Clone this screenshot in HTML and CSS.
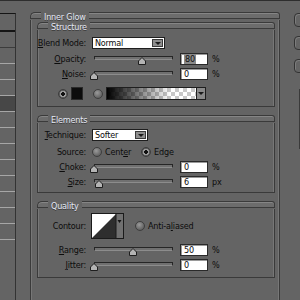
FILE: index.html
```html
<!DOCTYPE html>
<html lang="en">
<head>
    <meta charset="UTF-8">
    <title>Layer Style - Inner Glow</title>
    <link rel="stylesheet" href="styles.css">
</head>
<body>
    <div class="app">
        <ul class="layers">
            <li class="first"></li>
            <li class="shade"></li>
            <li></li>
            <li></li>
            <li></li>
            <li class="selected"></li>
            <li></li>
            <li></li>
            <li></li>
            <li></li>
            <li></li>
            <li></li>
            <li></li>
            <li></li>
        </ul>

        <div class="group outer">
            <div class="group-head"><span class="title">Inner Glow</span></div>
            <div class="group-body">

                <div class="group structure">
                    <div class="group-head"><span class="title">Structure</span></div>
                    <div class="group-body">
                        <div class="row">
                            <span class="label"><span><u>B</u>lend Mode:</span></span>
                            <div class="select wide"><span>Normal</span><i class="drop"></i></div>
                        </div>
                        <div class="row gap4">
                            <span class="label"><span><u>O</u>pacity:</span></span>
                            <div class="slider"><div class="track"></div>
                                <svg class="thumb" style="left:46px" width="8" height="8" viewBox="0 0 8 8"><polygon points="4,0.5 7.5,4 7.5,7.5 0.5,7.5 0.5,4" fill="#b4b4b4" stroke="#1e1e1e"/></svg>
                            </div>
                            <div class="field"><span class="hilite">80</span></div>
                            <span class="unit">%</span>
                        </div>
                        <div class="row gap3">
                            <span class="label"><span><u>N</u>oise:</span></span>
                            <div class="slider"><div class="track"></div>
                                <svg class="thumb" style="left:-2px" width="8" height="8" viewBox="0 0 8 8"><polygon points="4,0.5 7.5,4 7.5,7.5 0.5,7.5 0.5,4" fill="#b4b4b4" stroke="#1e1e1e"/></svg>
                            </div>
                            <div class="field">0</div>
                            <span class="unit">%</span>
                        </div>
                        <div class="row color-row">
                            <span class="radio on"></span>
                            <span class="swatch"></span>
                            <span class="radio"></span>
                            <div class="gradient"><i class="drop dark"></i></div>
                        </div>
                    </div>
                </div>

                <div class="group elements">
                    <div class="group-head"><span class="title">Elements</span></div>
                    <div class="group-body">
                        <div class="row">
                            <span class="label"><span><u>T</u>echnique:</span></span>
                            <div class="select"><span>Softer</span><i class="drop"></i></div>
                        </div>
                        <div class="row gap5">
                            <span class="label"><span>Source:</span></span>
                            <span class="radio"></span>
                            <span class="choice">Cent<u>e</u>r</span>
                            <span class="radio on"></span>
                            <span class="choice">Edge</span>
                        </div>
                        <div class="row gap3">
                            <span class="label"><span><u>C</u>hoke:</span></span>
                            <div class="slider"><div class="track"></div>
                                <svg class="thumb" style="left:-2px" width="8" height="8" viewBox="0 0 8 8"><polygon points="4,0.5 7.5,4 7.5,7.5 0.5,7.5 0.5,4" fill="#b4b4b4" stroke="#1e1e1e"/></svg>
                            </div>
                            <div class="field">0</div>
                            <span class="unit">%</span>
                        </div>
                        <div class="row gap3">
                            <span class="label"><span><u>S</u>ize:</span></span>
                            <div class="slider"><div class="track"></div>
                                <svg class="thumb" style="left:3px" width="8" height="8" viewBox="0 0 8 8"><polygon points="4,0.5 7.5,4 7.5,7.5 0.5,7.5 0.5,4" fill="#b4b4b4" stroke="#1e1e1e"/></svg>
                            </div>
                            <div class="field">6</div>
                            <span class="unit">px</span>
                        </div>
                    </div>
                </div>

                <div class="group quality">
                    <div class="group-head"><span class="title">Quality</span></div>
                    <div class="group-body">
                        <div class="row contour-row">
                            <span class="label"><span>Contour:</span></span>
                            <svg class="contour" width="33" height="26" viewBox="0 0 33 26">
                                <rect x="0.5" y="0.5" width="32" height="25" fill="#2e2e2e" stroke="#1a1a1a"/>
                                <polygon points="1,1 25,1 1,25" fill="#ffffff"/>
                                <rect x="25" y="1" width="7" height="24" fill="#707070"/>
                                <line x1="25" y1="1" x2="25" y2="25" stroke="#1a1a1a"/>
                                <polygon points="26.5,7 30.5,7 28.5,10" fill="#111"/>
                            </svg>
                            <span class="radio"></span>
                            <span class="choice">Anti-a<u>l</u>iased</span>
                        </div>
                        <div class="row gap5">
                            <span class="label"><span><u>R</u>ange:</span></span>
                            <div class="slider"><div class="track"></div>
                                <svg class="thumb" style="left:37px" width="8" height="8" viewBox="0 0 8 8"><polygon points="4,0.5 7.5,4 7.5,7.5 0.5,7.5 0.5,4" fill="#b4b4b4" stroke="#1e1e1e"/></svg>
                            </div>
                            <div class="field">50</div>
                            <span class="unit">%</span>
                        </div>
                        <div class="row gap3">
                            <span class="label"><span><u>J</u>itter:</span></span>
                            <div class="slider"><div class="track"></div>
                                <svg class="thumb" style="left:-2px" width="8" height="8" viewBox="0 0 8 8"><polygon points="4,0.5 7.5,4 7.5,7.5 0.5,7.5 0.5,4" fill="#b4b4b4" stroke="#1e1e1e"/></svg>
                            </div>
                            <div class="field">0</div>
                            <span class="unit">%</span>
                        </div>
                    </div>
                </div>

            </div>
        </div>

        <div class="side">
            <div class="btn"></div>
            <div class="btn"></div>
            <div class="btn"></div>
            <div class="preview-edge"></div>
        </div>
    </div>
</body>
</html>
```

FILE: styles.css
```css
* {
    box-sizing: border-box;
}
body {
    margin: 0;
    width: 300px;
    height: 300px;
    overflow: hidden;
    background: #646464;
    border-top: 1px solid #2e2e2e;
    font-family: "Liberation Sans Narrow", "DejaVu Sans Condensed", "Liberation Sans", sans-serif;
    font-size: 9px;
    letter-spacing: -0.2px;
    color: #0c0c0c;
}
.app {
    display: flex;
    height: 299px;
    overflow: hidden;
}
u {
    text-decoration-thickness: 1px;
    text-underline-offset: 1px;
}

/* layer list on the left */
.layers {
    list-style: none;
    margin: 12px 0 0;
    padding: 0;
    width: 16px;
    flex: none;
    border-top: 1px solid #151515;
    border-right: 1px solid #333;
}
.layers li {
    height: 16px;
    border-bottom: 1px solid #a6a6a6;
}
.layers li.first {
    height: 18px;
    border-bottom: 2px solid #151515;
}
.layers li.shade {
    border-bottom-color: #3c3c3c;
}
.layers li.selected {
    background: #474747;
}

/* group frames */
.group-head {
    display: flex;
    align-items: flex-start;
    height: 8px;
}
.group-head::before,
.group-head::after {
    content: "";
    height: 5px;
    background: #6c6c6c;
    border: 1px solid #3a3a3a;
    box-shadow: inset 0 1px 0 #858585;
}
.group-head::before {
    width: 10px;
    border-right: 0;
    border-radius: 5px 0 0 0;
}
.group-head::after {
    flex: 1;
    border-left: 0;
    border-radius: 0 3px 0 0;
}
.title {
    color: #e4e9f5;
    line-height: 8px;
    padding: 0 3px;
    margin-top: 1px;
    text-shadow: 0 1px 0 #3a3a3a;
}
.group-body {
    border: 1px solid #3a3a3a;
    border-top: 0;
    box-shadow: inset 1px 0 0 #777, inset -1px 0 0 #777;
}
.outer {
    margin: 11px 0 0 14px;
    width: 250px;
    flex: none;
}
.outer > .group-body {
    height: 290px;
    padding: 2px 4px 0 6px;
}
.structure > .group-body {
    padding: 7px 0 6px;
}
.elements {
    margin-top: 8px;
}
.elements > .group-body {
    padding: 6px 0 4px;
}
.quality {
    margin-top: 8px;
}
.quality > .group-body {
    padding: 4px 0 6px;
}

/* rows and controls */
.row {
    display: flex;
    align-items: center;
    height: 12px;
}
.gap3 { margin-top: 3px; }
.gap4 { margin-top: 4px; }
.gap5 { margin-top: 5px; }
.label {
    display: flex;
    justify-content: flex-end;
    white-space: nowrap;
    width: 48px;
    margin-right: 6px;
    flex: none;
}
.select {
    display: flex;
    align-items: center;
    justify-content: space-between;
    width: 56px;
    height: 12px;
    padding: 0 1px 0 2px;
    background: #fff;
    border: 1px solid #1e1e1e;
}
.select.wide {
    width: 73px;
}
.drop {
    width: 11px;
    height: 8px;
    background: #8e8e8e;
    border: 1px solid #3a3a3a;
    position: relative;
}
.drop::after {
    content: "";
    position: absolute;
    left: 2px;
    top: 2px;
    border: 3px solid transparent;
    border-top: 3px solid #1a1a1a;
    border-bottom: 0;
}
.slider {
    position: relative;
    width: 81px;
    height: 12px;
    align-self: flex-start;
    margin-right: 7px;
}
.track {
    margin: 3px 0 0 2px;
    height: 4px;
    background: #707070;
    border: 1px solid #262626;
    border-bottom-color: #8c8c8c;
}
.thumb {
    position: absolute;
    top: 4px;
}
.field {
    width: 28px;
    height: 12px;
    background: #fff;
    border: 1px solid #2a2a2a;
    box-shadow: inset 1px 1px 0 #9a9a9a;
    padding-left: 3px;
    line-height: 10px;
}
.hilite {
    background: #8a8a8a;
    color: #111;
    padding: 0 1px;
}
.unit {
    margin-left: 4px;
}
.radio {
    width: 10px;
    height: 10px;
    border-radius: 50%;
    flex: none;
    border: 1px solid #3e3e3e;
    background: radial-gradient(circle at 40% 35%, #9a9a9a, #5c5c5c 80%);
}
.radio.on {
    background: radial-gradient(circle, #111 0 1.6px, #9a9a9a 2px 3px, #5e5e5e 3.5px);
}
.choice {
    margin: 0 10px 0 3px;
    white-space: nowrap;
}
.color-row {
    margin-top: 7px;
    height: 13px;
    padding-left: 20px;
}
.swatch {
    width: 12px;
    height: 13px;
    margin: 0 10px 0 3px;
    background: #0c0c0c;
    border: 1px solid #2a2a2a;
}
.gradient {
    display: flex;
    justify-content: flex-end;
    align-items: stretch;
    width: 100px;
    height: 13px;
    margin-left: 3px;
    border: 1px solid #1e1e1e;
    background:
        linear-gradient(to right, #000, rgba(0, 0, 0, 0) 65%),
        repeating-conic-gradient(#c8c8c8 0 25%, #fff 0 50%) 0 0 / 8px 8px;
}
.gradient .drop {
    width: 9px;
    height: auto;
    background: #8a8a8a;
    border: 0;
    border-left: 1px solid #1e1e1e;
}
.gradient .drop::after {
    left: 1px;
    top: 4px;
}
.contour-row {
    height: 26px;
}
.contour {
    margin: 0 11px 0 -1px;
}

/* right edge of the dialog */
.side {
    margin-left: 14px;
    padding-top: 12px;
    display: flex;
    flex-direction: column;
    gap: 9px;
}
.btn {
    width: 24px;
    height: 14px;
    border: 1px solid #333;
    border-radius: 4px;
    box-shadow: inset 1px 1px 0 #7c7c7c;
}
.preview-edge {
    margin: 7px 0 0 5px;
    height: 60px;
    border-left: 1px solid #3a3a3a;
}
```
